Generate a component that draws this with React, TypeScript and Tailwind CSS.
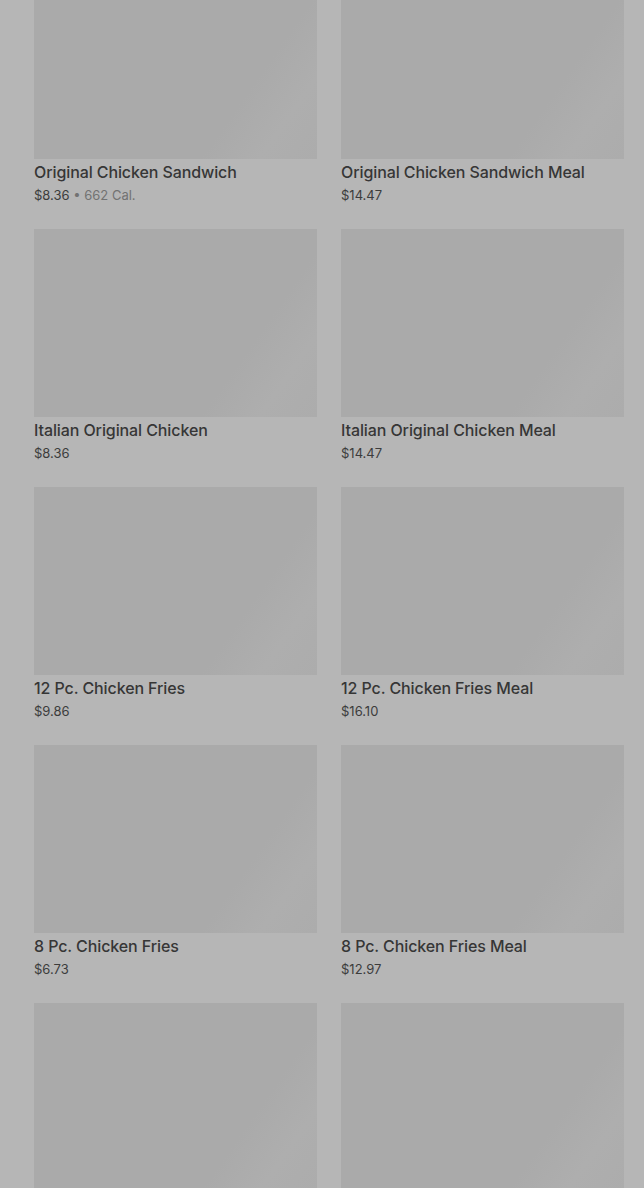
const items = [
  { name: "Original Chicken Sandwich", price: "$8.36", cal: "662 Cal." },
  { name: "Original Chicken Sandwich Meal", price: "$14.47" },
  { name: "Italian Original Chicken", price: "$8.36" },
  { name: "Italian Original Chicken Meal", price: "$14.47" },
  { name: "12 Pc. Chicken Fries", price: "$9.86" },
  { name: "12 Pc. Chicken Fries Meal", price: "$16.10" },
  { name: "8 Pc. Chicken Fries", price: "$6.73" },
  { name: "8 Pc. Chicken Fries Meal", price: "$12.97" },
  { name: "", price: "" },
  { name: "", price: "" },
];

function ItemCard({ name, price, cal }: { name: string; price: string; cal?: string }) {
  return (
    <div className="flex flex-col">
      <div className="h-[188px] w-full bg-[linear-gradient(125deg,#aaaaaa_0%,#aaaaaa_72%,#aeaeae_86%,#acacac_100%)]" />
      {name && (
        <>
          <div className="mt-[2px] truncate text-[16px] font-medium leading-[22px] tracking-[-0.1px] text-[#363636]">
            {name}
          </div>
          <div className="mt-[2px] text-[13px] leading-[20px] text-[#3c3c3c]">
            {price}
            {cal && <span className="text-[#727272]"> • {cal}</span>}
          </div>
        </>
      )}
    </div>
  );
}

export default function App() {
  return (
    <div className="h-[1188px] w-[644px] overflow-hidden bg-[#b6b6b6] font-['Inter','Liberation_Sans',sans-serif]">
      <div className="-mt-[29px] grid grid-cols-2 gap-x-[24px] gap-y-[24px] pl-[34px] pr-[20px]">
        {items.map((it, i) => (
          <ItemCard key={i} {...it} />
        ))}
      </div>
    </div>
  );
}
